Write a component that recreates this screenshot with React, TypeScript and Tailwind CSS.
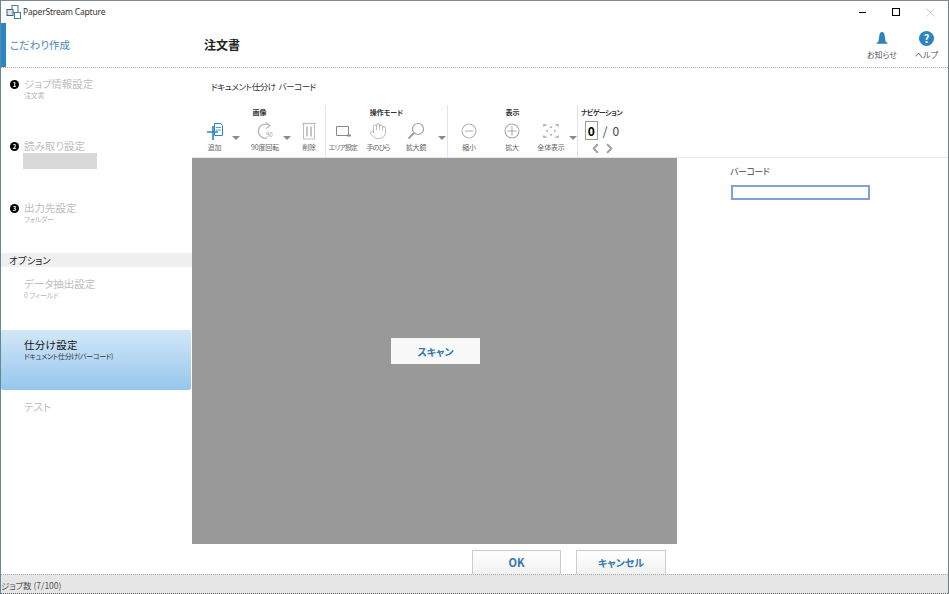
import { ChevronLeft, ChevronRight, Hand } from "lucide-react";
import type { ReactNode } from "react";

function Arrow({ width }: { width: string }) {
  return (
    <div className={`${width} flex h-full items-start justify-center pt-[15px]`}>
      <span className="h-0 w-0 border-x-[4px] border-t-[4px] border-x-transparent border-t-[#8a8a8a]" />
    </div>
  );
}

function Tool({ width, label, tight, children }: { width: string; label: string; tight?: boolean; children: ReactNode }) {
  return (
    <div className={`${width} flex flex-col items-center`}>
      <div className="flex h-[20px] w-[20px] items-center justify-center">{children}</div>
      <span className={`mt-[1px] whitespace-nowrap text-[7px] leading-[10px] text-[#666] ${tight ? "tracking-[-0.9px]" : "tracking-[-0.15px]"}`}>{label}</span>
    </div>
  );
}

function Group({ width, title, titleClass, children }: { width: string; title: string; titleClass?: string; children: ReactNode }) {
  return (
    <div className={`${width} flex h-full flex-col border-r border-[#e4e4e4]`}>
      <div className={`h-[16px] pt-[2px] text-center text-[7px] font-bold leading-[10px] text-[#333] ${titleClass ?? ""}`}>{title}</div>
      <div className="relative flex flex-1 items-start">{children}</div>
    </div>
  );
}

function Step({ num, title, sub, children }: { num: string; title: string; sub?: string; children?: ReactNode }) {
  return (
    <div className="flex h-[62px] pt-[9px]">
      <div className="w-[23px] pl-[9px] pt-[3px]">
        <span className="flex h-[9px] w-[9px] items-center justify-center rounded-full bg-black text-[6px] font-bold leading-none text-white">
          {num}
        </span>
      </div>
      <div>
        <div className="text-[10.5px] leading-[14px] text-[#bdbdbd]">{title}</div>
        {sub && <div className="text-[7px] leading-[8px] tracking-[-0.3px] text-[#b5b5b5]">{sub}</div>}
        {children}
      </div>
    </div>
  );
}

function AppIcon() {
  return (
    <svg width="16" height="16" viewBox="0 0 16 16" fill="none">
      <rect x="6" y="1.5" width="6" height="7" fill="#fff" stroke="#3f7f9f" />
      <rect x="1" y="5.5" width="6" height="6" fill="#dbe8ef" stroke="#44606e" />
      <rect x="8.5" y="8.5" width="6" height="6" fill="#fff" stroke="#3f7f9f" />
    </svg>
  );
}

export default function App() {
  return (
    <div className="flex h-[594px] w-[949px] flex-col overflow-hidden border-x border-t border-l-[#5f8a94] border-r-[#6f7f86] border-t-[#7f8a8f] bg-white font-['Noto_Sans_CJK_JP',sans-serif] [font-feature-settings:'palt']">
      {/* title bar */}
      <div className="flex h-[22px] items-center">
        <div className="ml-[5px] mr-[1px]">
          <AppIcon />
        </div>
        <span className="font-['Noto_Sans',sans-serif] text-[8.5px] tracking-[-0.2px] text-[#333]">PaperStream Capture</span>
        <div className="ml-auto flex items-center">
          <span className="mr-[26px] h-[1px] w-[7px] bg-black" />
          <span className="mr-[26px] h-[8px] w-[8px] border border-black" />
          <svg className="mr-[13px]" width="9" height="9" viewBox="0 0 9 9" stroke="#cfcfcf" strokeWidth="1">
            <path d="M0.5 0.5l8 8M8.5 0.5l-8 8" />
          </svg>
        </div>
      </div>

      {/* header */}
      <div className="flex h-[45px] border-b border-dotted border-[#aaa]">
        <div className="flex w-[191px] items-center border-l-[5px] border-[#2a86c8] pl-[4px] text-[10.5px] text-[#4a88ba]">
          こだわり作成
        </div>
        <div className="flex flex-1 items-center pl-[12px] text-[12px] font-bold text-[#222]">注文書</div>
        <div className="flex flex-col items-center pt-[8px]">
          <svg width="14" height="14" viewBox="0 0 14 14" fill="#2b84c0">
            <path d="M7 1c1.6 0 2.2 1.2 2.5 2.8L10.6 10.5l2.4 2.2H1l2.4-2.2L4.5 3.8C4.8 2.2 5.4 1 7 1z" />
          </svg>
          <span className="mt-[4px] text-[8px] leading-[12px] text-[#555]">お知らせ</span>
        </div>
        <div className="ml-[18px] mr-[10px] flex flex-col items-center pt-[8px]">
          <span className="flex h-[15px] w-[15px] items-center justify-center rounded-full bg-[#2b84c0] text-[11px] font-bold leading-none text-white">
            ?
          </span>
          <span className="mt-[3px] text-[8px] leading-[12px] text-[#555]">ヘルプ</span>
        </div>
      </div>

      {/* body */}
      <div className="flex flex-1">
        <div className="w-[191px]">
          <Step num="1" title="ジョブ情報設定" sub="注文書" />
          <Step num="2" title="読み取り設定">
            <div className="-ml-[1px] h-[16px] w-[74px] bg-[#d9d9d9]" />
          </Step>
          <Step num="3" title="出力先設定" sub="フォルダー" />
          <div className="-mt-[1px] h-[14px] bg-[#f0f0f0] pl-[8px] text-[9.5px] leading-[14px] text-[#222]">オプション</div>
          <div className="h-[63px] pl-[23px] pt-[10px]">
            <div className="text-[10.5px] leading-[14px] text-[#bdbdbd]">データ抽出設定</div>
            <div className="text-[7px] leading-[8px] tracking-[-0.1px] text-[#b5b5b5]">0 フィールド</div>
          </div>
          <div className="mr-[1px] h-[60px] rounded-[2px] bg-gradient-to-b from-[#d2e7f8] to-[#96c6ec] pl-[23px] pt-[8px]">
            <div className="text-[10.5px] leading-[14px] tracking-[0.3px] text-[#111]">仕分け設定</div>
            <div className="text-[7px] leading-[8px] tracking-[-0.3px] text-[#333]">ドキュメント仕分け(バーコード)</div>
          </div>
          <div className="pl-[23px] pt-[10px] text-[10.5px] leading-[14px] text-[#bdbdbd]">テスト</div>
        </div>

        <div className="flex flex-1 flex-col">
          {/* doc title + toolbar */}
          <div className="h-[90px] border-b border-[#e8e8e8]">
            <div className="flex h-[37px] items-center pl-[19px] text-[8.5px] tracking-[-0.45px] text-[#333]">ドキュメント仕分け&nbsp;&nbsp;バーコード</div>
            <div className="flex h-[52px]">
              <Group width="w-[134px]" title="画像" titleClass="pl-[2px]">
                <div className="w-[7px]" />
                <Tool width="w-[31px]" label="追加">
                  <svg width="20" height="20" viewBox="0 0 20 20" fill="none" stroke="#2a86c8">
                    <path d="M9.5 2.5h6l2 2v10h-8z" strokeWidth="1" />
                    <path d="M11 6.5h5M11 9h5" strokeWidth="0.8" />
                    <path d="M2 11h11M8 5v14" strokeWidth="1.6" />
                  </svg>
                </Tool>
                <Arrow width="w-[12px]" />
                <div className="w-[7px]" />
                <Tool width="w-[32px]" label="90度回転">
                  <svg width="20" height="20" viewBox="0 0 20 20" fill="none" stroke="#bdbdbd">
                    <path d="M14.5 4.5A7 7 0 1 0 12 17" strokeWidth="1.4" />
                    <path d="M10.5 1.5l4.5 3-4 3" strokeWidth="1.2" />
                    <text x="11" y="16" fontSize="6" fill="#9a9a9a" stroke="none">
                      90
                    </text>
                  </svg>
                </Tool>
                <Arrow width="w-[12px]" />
                <Tool width="w-[32px]" label="削除">
                  <svg width="20" height="20" viewBox="0 0 20 20" fill="none" stroke="#c0c0c0">
                    <path d="M3 2.5h14" strokeWidth="1.4" />
                    <path d="M4.5 3v15h11V3" strokeWidth="1.1" />
                    <path d="M8 5.5v10M12 5.5v10" strokeWidth="1.8" />
                  </svg>
                </Tool>
              </Group>
              <Group width="w-[122px]" title="操作モード">
                <Tool width="w-[34px]" label="エリア設定" tight>
                  <svg width="20" height="20" viewBox="0 0 20 20" fill="none" stroke="#8a8a8a">
                    <path d="M3.5 5.5h12v9h-12z" />
                    <path d="M14 14.5h4" strokeWidth="2" />
                  </svg>
                </Tool>
                <Tool width="w-[36px]" label="手のひら" tight>
                  <Hand size={18} strokeWidth={1} color="#a8a8a8" />
                </Tool>
                <Tool width="w-[40px]" label="拡大鏡">
                  <svg width="20" height="20" viewBox="0 0 20 20" fill="none" stroke="#a0a0a0">
                    <circle cx="12" cy="8" r="5.5" strokeWidth="1.2" />
                    <path d="M8 12l-5.5 5.5" strokeWidth="2" />
                  </svg>
                </Tool>
                <Arrow width="w-[11px]" />
              </Group>
              <Group width="w-[130px]" title="表示">
                <Tool width="w-[42px]" label="縮小">
                  <svg width="18" height="18" viewBox="0 0 18 18" fill="none" stroke="#b5b5b5" strokeWidth="1.1">
                    <circle cx="9" cy="9" r="7" />
                    <path d="M5 9h8" />
                  </svg>
                </Tool>
                <Tool width="w-[44px]" label="拡大">
                  <svg width="18" height="18" viewBox="0 0 18 18" fill="none" stroke="#a8a8a8" strokeWidth="1.1">
                    <circle cx="9" cy="9" r="7" />
                    <path d="M4.5 9h9M9 4.5v9" />
                  </svg>
                </Tool>
                <Tool width="w-[34px]" label="全体表示">
                  <svg width="20" height="20" viewBox="0 0 18 18" fill="none" stroke="#a0a0a0">
                    <path d="M2.5 5V3.5H5M13 3.5h2.5V5M2.5 13v1.5H5M13 14.5h2.5V13" />
                    <path d="M9 4.5l-1.5 1.5h3zM9 13.5l-1.5-1.5h3zM4.5 9L6 7.5v3zM13.5 9L12 7.5v3z" fill="#a0a0a0" stroke="none" />
                  </svg>
                </Tool>
                <Arrow width="w-[9px]" />
              </Group>
              <div className="flex w-[50px] flex-col items-center">
                <div className="-ml-[3px] pt-[2px] text-[7px] font-bold leading-[10px] tracking-[-0.5px] text-[#333]">ナビゲーション</div>
                <div className="-ml-[2px] flex items-center pt-[4px] text-[12px] leading-[19px] text-[#444]">
                  <span className="mr-[5px] flex h-[19px] w-[13px] items-center justify-center border border-[#999] font-bold text-black">0</span>
                  <span>/</span>
                  <span className="ml-[5px]">0</span>
                </div>
                <div className="-ml-[2px] mt-[1px] flex text-[#a0a0a0]">
                  <ChevronLeft className="-mr-[1px]" size={15} strokeWidth={3} />
                  <ChevronRight size={15} strokeWidth={3} />
                </div>
              </div>
            </div>
          </div>

          {/* canvas + side panel */}
          <div className="flex flex-1">
            <div className="flex w-[485px] items-center justify-center bg-[#999]">
              <button className="ml-[2px] h-[26px] w-[89px] bg-[#f8f8f8] text-[10px] font-bold text-[#2f77ad]">スキャン</button>
            </div>
            <div className="flex-1 pl-[53px] pt-[7px]">
              <div className="text-[9px] leading-[14px] tracking-[-0.5px] text-[#444]">バーコード</div>
              <div className="ml-[1px] mt-[6px] h-[15px] w-[139px] border-2 border-[#7ba3d8] bg-white" />
            </div>
          </div>

          {/* ok / cancel */}
          <div className="flex h-[30px] items-end gap-[15px] pl-[280px]">
            <button className="h-[24px] w-[89px] border border-b-0 border-[#ccc] bg-gradient-to-b from-white to-[#f1f1f1] text-[11px] font-bold text-[#2f77ad]">OK</button>
            <button className="h-[24px] w-[90px] border border-b-0 border-[#ccc] bg-gradient-to-b from-white to-[#f1f1f1] text-[10px] font-bold text-[#2f77ad]">キャンセル</button>
          </div>
        </div>
      </div>

      {/* status bar */}
      <div className="h-[20px] border-y border-dotted border-t-[#aaa] border-b-[#555] bg-[#e6e6e6] pt-[3px] text-[8.5px] leading-[14px] text-[#555]">ジョブ数 (7/100)</div>
    </div>
  );
}
